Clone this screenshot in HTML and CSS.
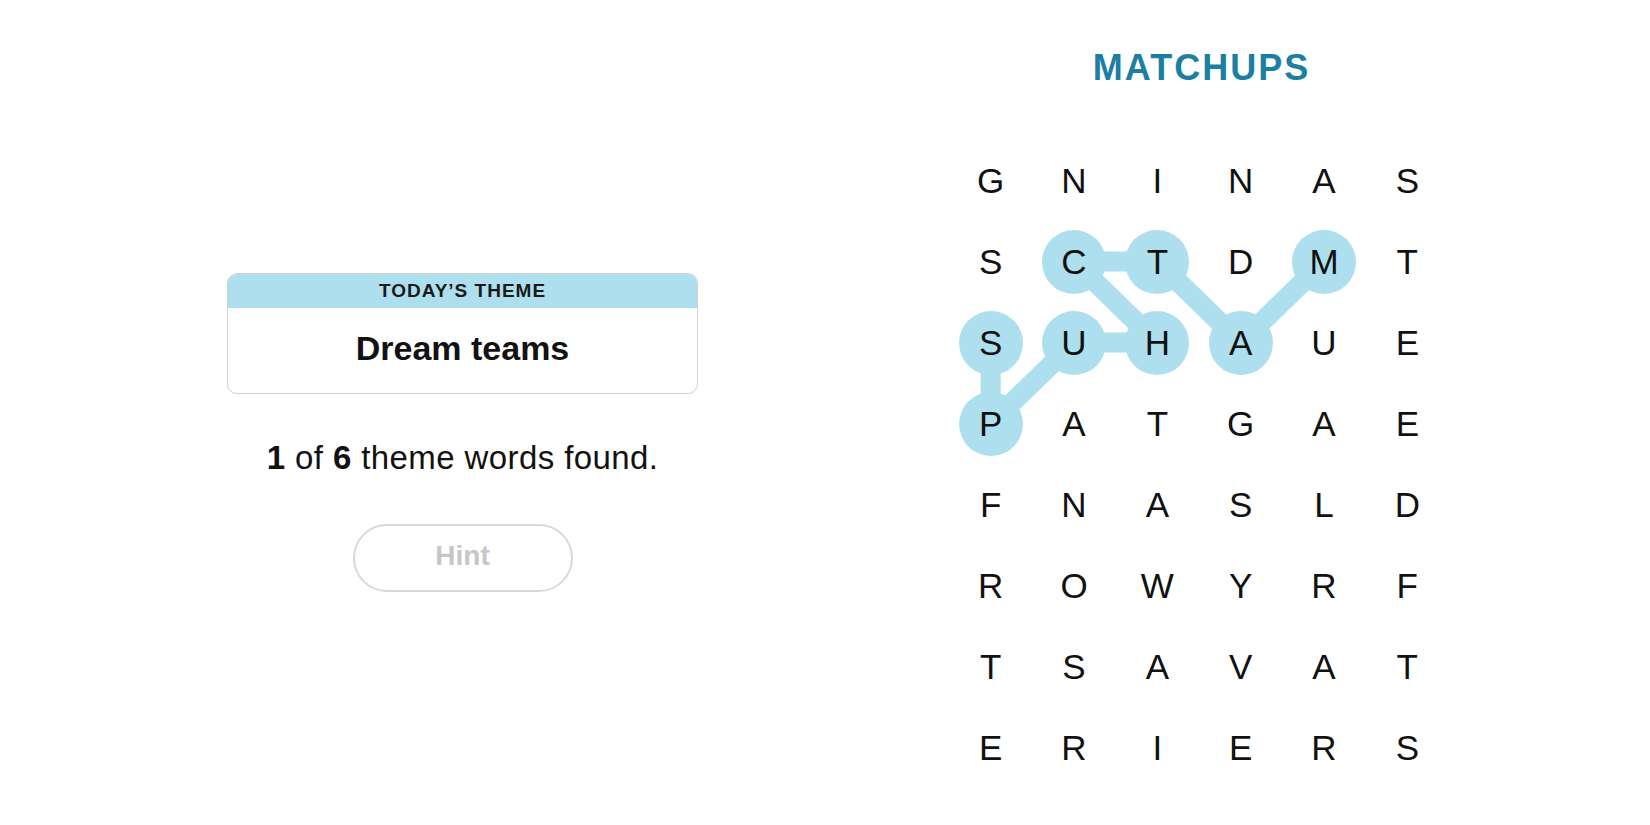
FILE: index.html
```html
<!DOCTYPE html>
<html lang="en">
<head>
<meta charset="utf-8">
<title>Strands</title>
<link rel="stylesheet" href="styles.css">
</head>
<body>
<div class="page">
  <section class="left">
    <div class="card">
      <div class="card-head">TODAY’S THEME</div>
      <div class="card-body">Dream teams</div>
    </div>
    <p class="progress"><b>1</b> of <b>6</b> theme words found.</p>
    <button class="hint" type="button">Hint</button>
  </section>
  <section class="right">
    <h1 class="title">MATCHUPS</h1>
    <div class="board">
      <svg class="links" width="500" height="648" viewBox="0 0 500 648" aria-hidden="true">
        <polyline points="375,121.5 291.67,202.5 208.33,121.5 125,121.5 208.33,202.5 125,202.5 41.67,283.5 41.67,202.5" fill="none" stroke="#aedfee" stroke-width="20" stroke-linejoin="round" stroke-linecap="round"/>
      </svg>
      <span class="cell">G</span><span class="cell">N</span><span class="cell">I</span><span class="cell">N</span><span class="cell">A</span><span class="cell">S</span>
      <span class="cell">S</span><span class="cell found">C</span><span class="cell found">T</span><span class="cell">D</span><span class="cell found">M</span><span class="cell">T</span>
      <span class="cell found">S</span><span class="cell found">U</span><span class="cell found">H</span><span class="cell found">A</span><span class="cell">U</span><span class="cell">E</span>
      <span class="cell found">P</span><span class="cell">A</span><span class="cell">T</span><span class="cell">G</span><span class="cell">A</span><span class="cell">E</span>
      <span class="cell">F</span><span class="cell">N</span><span class="cell">A</span><span class="cell">S</span><span class="cell">L</span><span class="cell">D</span>
      <span class="cell">R</span><span class="cell">O</span><span class="cell">W</span><span class="cell">Y</span><span class="cell">R</span><span class="cell">F</span>
      <span class="cell">T</span><span class="cell">S</span><span class="cell">A</span><span class="cell">V</span><span class="cell">A</span><span class="cell">T</span>
      <span class="cell">E</span><span class="cell">R</span><span class="cell">I</span><span class="cell">E</span><span class="cell">R</span><span class="cell">S</span>
    </div>
  </section>
</div>
</body>
</html>
```
FILE: styles.css
```css
html, body {
  margin: 0;
  padding: 0;
  background: #ffffff;
}

body {
  font-family: "Liberation Sans", Arial, sans-serif;
  color: #121212;
}

.page {
  display: flex;
  width: 1650px;
  height: 825px;
  overflow: hidden;
}

.left {
  width: 925px;
  flex: none;
  display: flex;
  flex-direction: column;
  align-items: center;
  padding-top: 273px;
  box-sizing: border-box;
}

.card {
  width: 471px;
  box-sizing: border-box;
  border: 1px solid #d0d0d0;
  border-radius: 10px;
  overflow: hidden;
}

.card-head {
  height: 34px;
  background: #aedfee;
  display: flex;
  align-items: center;
  justify-content: center;
  font-size: 19px;
  font-weight: 700;
  letter-spacing: 1px;
  color: #1a1a1a;
}

.card-body {
  height: 85px;
  display: flex;
  align-items: center;
  justify-content: center;
  padding-bottom: 4px;
  box-sizing: border-box;
  font-size: 34px;
  font-weight: 700;
  color: #121212;
}

.progress {
  margin: 44px 0 0;
  font-size: 33px;
  line-height: 40px;
  letter-spacing: 0.4px;
  color: #121212;
}

.progress b {
  font-weight: 700;
}

.hint {
  margin-top: 46px;
  width: 220px;
  height: 68px;
  border: 2px solid #d9d9d9;
  border-radius: 34px;
  background: #ffffff;
  font-family: "Liberation Sans", Arial, sans-serif;
  font-size: 28px;
  font-weight: 700;
  color: #c6c6c6;
  padding: 0 0 4px;
}

.right {
  width: 500px;
  flex: none;
  margin-left: 24px;
  display: flex;
  flex-direction: column;
}

.title {
  margin: 0;
  padding: 47px 0 0 5px;
  font-size: 36px;
  line-height: 41px;
  font-weight: 700;
  letter-spacing: 2px;
  text-align: center;
  color: #1c7fa2;
}

.board {
  position: relative;
  margin-top: 52px;
  display: grid;
  grid-template-columns: repeat(6, 83.333px);
  grid-auto-rows: 81px;
}

.links {
  position: absolute;
  left: 0;
  top: 0;
  z-index: 0;
}

.cell {
  position: relative;
  z-index: 1;
  display: flex;
  align-items: center;
  justify-content: center;
  font-size: 35px;
  line-height: 1;
  color: #111111;
}

.cell.found::before {
  content: "";
  position: absolute;
  left: 50%;
  top: 50%;
  width: 64px;
  height: 64px;
  margin: -32px 0 0 -32px;
  border-radius: 50%;
  background: #aedfee;
  z-index: -1;
}
```
